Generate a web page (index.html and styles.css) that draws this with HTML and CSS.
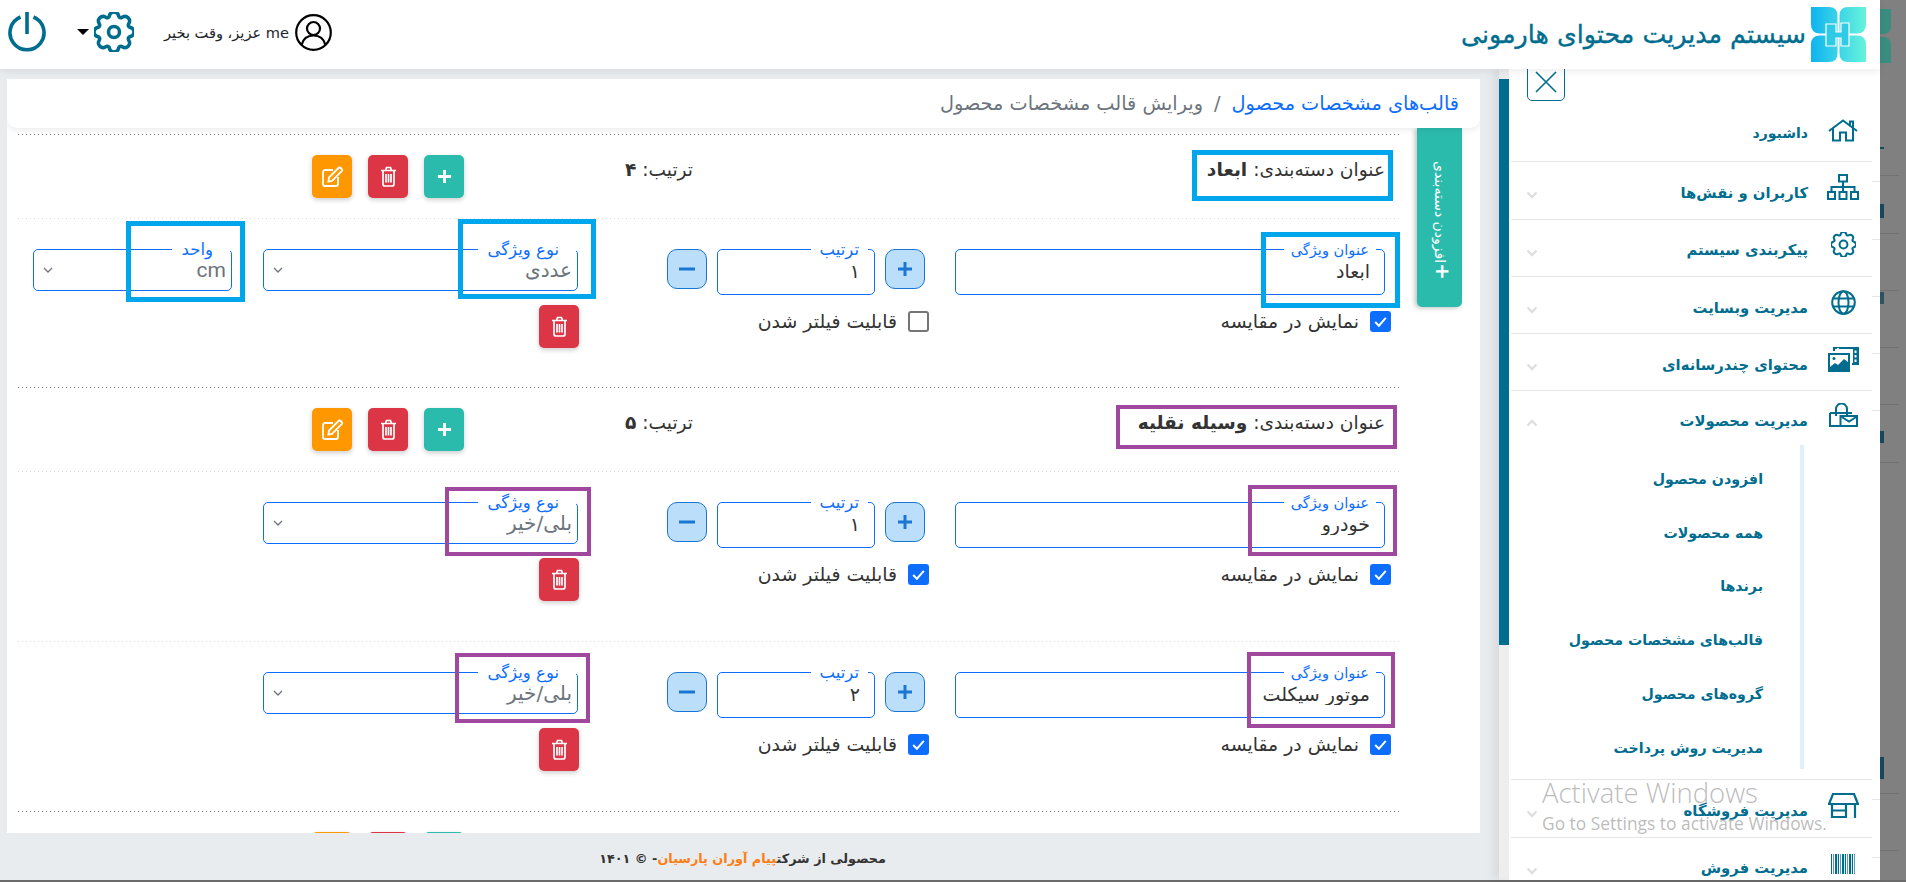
FILE: index.html
```html
<!DOCTYPE html>
<html lang="fa" dir="rtl">
<head>
<meta charset="utf-8">
<title>سیستم مدیریت محتوای هارمونی</title>
<link rel="stylesheet" href="styles.css">
</head>
<body>
<svg class="defs" width="0" height="0">
  <symbol id="trash" viewBox="0 0 17 21"><path d="M1 4.5h15M5.5 4.5l1-3h4l1 3M3 4.5V18a2 2 0 0 0 2 2h7a2 2 0 0 0 2-2V4.5M6 8v8.5M8.5 8v8.5M11 8v8.5" fill="none" stroke="#fff" stroke-width="1.7"/></symbol>
  <symbol id="edit" viewBox="0 0 23 21"><path d="M12 4H4a2 2 0 0 0-2 2v12a2 2 0 0 0 2 2h11a2 2 0 0 0 2-2v-7M8 11.5 17.5 2a1.6 1.6 0 0 1 2.2 0l1 1a1.6 1.6 0 0 1 0 2.2L11 15l-3.6.6z" fill="none" stroke="#fff" stroke-width="1.8"/></symbol>
  <symbol id="plus" viewBox="0 0 16 16"><path d="M8 1v14M1 8h14" fill="none" stroke="currentColor" stroke-width="3"/></symbol>
  <symbol id="minus" viewBox="0 0 16 16"><path d="M0 8h16" fill="none" stroke="currentColor" stroke-width="3"/></symbol>
  <symbol id="tick" viewBox="0 0 16 16"><path d="M3 8.5 6.5 12 13 4.5" fill="none" stroke="#fff" stroke-width="1.8"/></symbol>
  <symbol id="chev" viewBox="0 0 12 12"><path d="M2 4l4 4 4-4" fill="none" stroke="#6c757d" stroke-width="1.3"/></symbol>
  <symbol id="fold" viewBox="0 0 12 8"><path d="M1.5 1.5 6 6l4.5-4.5" fill="none" stroke="#dedede" stroke-width="2.4"/></symbol>
</svg>

<div class="screen">
  <div class="app">
    <header class="topbar">
      <div class="brand">
        <svg class="logo" viewBox="0 0 55 55" width="55" height="55">
          <defs><linearGradient id="lg" x1="0" y1="0" x2="1" y2="0"><stop offset="0" stop-color="#0fb4f0"/><stop offset="1" stop-color="#66f3dc"/></linearGradient></defs>
          <path fill="url(#lg)" d="M0 0H18Q26.5 0 26.5 8.5V26.5H9Q0 26.5 0 17.5ZM55 0H37Q28.5 0 28.5 8.5V26.5H46Q55 26.5 55 17.5ZM0 55H18Q26.5 55 26.5 46.5V28.5H9Q0 28.5 0 37.5ZM55 55H37Q28.5 55 28.5 46.5V28.5H46Q55 28.5 55 37.5Z"/>
          <path fill="#2fcbe6" stroke="#fff" stroke-width="1.2" d="M15 17h10v8h5v-9h8v23h-8v-8h-5v8h-10z"/>
        </svg>
        <span class="brand-title">سیستم مدیریت محتوای هارمونی</span>
      </div>
      <div class="tools">
        <svg class="user" viewBox="0 0 37 37" width="37" height="37"><circle cx="18.5" cy="18.5" r="17.3" fill="none" stroke="#000" stroke-width="2.2"/><circle cx="18.5" cy="14.5" r="6.5" fill="none" stroke="#000" stroke-width="2.2"/><path d="M6.5 31c1.5-6 6-9.5 12-9.5s10.5 3.5 12 9.5" fill="none" stroke="#000" stroke-width="2.2"/></svg>
        <span class="greet">me عزیز، وقت بخیر</span>
        <svg class="gear" viewBox="0 0 16 16" width="40" height="40"><g fill="none" stroke="#006d8f" stroke-width="1.4"><circle cx="8" cy="8" r="2.2"/><path d="M9.796 1.343c-.527-1.79-3.065-1.79-3.592 0l-.094.319a.873.873 0 0 1-1.255.52l-.292-.16c-1.64-.892-3.433.902-2.54 2.541l.159.292a.873.873 0 0 1-.52 1.255l-.319.094c-1.79.527-1.79 3.065 0 3.592l.319.094a.873.873 0 0 1 .52 1.255l-.16.292c-.892 1.64.901 3.434 2.541 2.54l.292-.159a.873.873 0 0 1 1.255.52l.094.319c.527 1.79 3.065 1.79 3.592 0l.094-.319a.873.873 0 0 1 1.255-.52l.292.16c1.64.893 3.434-.902 2.54-2.541l-.159-.292a.873.873 0 0 1 .52-1.255l.319-.094c1.79-.527 1.79-3.065 0-3.592l-.319-.094a.873.873 0 0 1-.52-1.255l.16-.292c.893-1.64-.902-3.433-2.541-2.54l-.292.159a.873.873 0 0 1-1.255-.52z"/></g></svg>
        <span class="caret"></span>
        <svg class="power" viewBox="0 0 40 40" width="40" height="40"><g fill="none" stroke="#006d8f" stroke-width="3.6"><path d="M13.5 5a17 17 0 1 0 13 0"/><path d="M20 0v22"/></g></svg>
      </div>
    </header>

    <div class="workspace">
      <aside class="sidebar">
        <div class="panel">
          <button class="close"><svg viewBox="0 0 22 22" width="22" height="22"><path d="M1 1l20 20M21 1 1 21" stroke="#006d8f" stroke-width="1.6"/></svg></button>
          <nav class="menu">
            <div class="item first">
              <span class="ico"><svg viewBox="0 0 30 23" width="30" height="23"><path d="M1 12 15 1.5 29 12M5 9v12.5h7v-8h6v8h7V9M22 6.5V2.5h3v7" fill="none" stroke="#006d8f" stroke-width="2"/></svg></span>
              <span class="label">داشبورد</span>
            </div>
            <div class="item">
              <span class="ico"><svg viewBox="0 0 32 26" width="32" height="26"><g fill="none" stroke="#006d8f" stroke-width="2"><rect x="12" y="1" width="8" height="6.5"/><rect x="1" y="18" width="7" height="7"/><rect x="12.5" y="18" width="7" height="7"/><rect x="24" y="18" width="7" height="7"/><path d="M16 7.5V18M4.5 18v-5h23v5"/></g></svg></span>
              <span class="label">کاربران و نقش‌ها</span>
              <svg class="fold"><use href="#fold"/></svg>
            </div>
            <div class="item">
              <span class="ico"><svg viewBox="0 0 16 16" width="25" height="25"><g fill="none" stroke="#006d8f" stroke-width="1.3"><circle cx="8" cy="8" r="2.5"/><path d="M9.796 1.343c-.527-1.79-3.065-1.79-3.592 0l-.094.319a.873.873 0 0 1-1.255.52l-.292-.16c-1.64-.892-3.433.902-2.54 2.541l.159.292a.873.873 0 0 1-.52 1.255l-.319.094c-1.79.527-1.79 3.065 0 3.592l.319.094a.873.873 0 0 1 .52 1.255l-.16.292c-.892 1.64.901 3.434 2.541 2.54l.292-.159a.873.873 0 0 1 1.255.52l.094.319c.527 1.79 3.065 1.79 3.592 0l.094-.319a.873.873 0 0 1 1.255-.52l.292.16c1.64.893 3.434-.902 2.54-2.541l-.159-.292a.873.873 0 0 1 .52-1.255l.319-.094c1.79-.527 1.79-3.065 0-3.592l-.319-.094a.873.873 0 0 1-.52-1.255l.16-.292c.893-1.64-.902-3.433-2.541-2.54l-.292.159a.873.873 0 0 1-1.255-.52z"/></g></svg></span>
              <span class="label">پیکربندی سیستم</span>
              <svg class="fold"><use href="#fold"/></svg>
            </div>
            <div class="item">
              <span class="ico"><svg viewBox="0 0 25 25" width="25" height="25"><g fill="none" stroke="#006d8f" stroke-width="2"><circle cx="12.5" cy="12.5" r="11.3"/><ellipse cx="12.5" cy="12.5" rx="5" ry="11.3"/><path d="M2 8.5h21M2 16.5h21"/></g></svg></span>
              <span class="label">مدیریت وبسایت</span>
              <svg class="fold"><use href="#fold"/></svg>
            </div>
            <div class="item">
              <span class="ico"><svg viewBox="0 0 31 25" width="31" height="25"><path fill="#006d8f" d="M0 6h22v19H0z"/><path fill="#fff" d="M2 8h18v7l-4-3-6 6-3-2-5 4z"/><circle cx="6" cy="11.5" r="1.5" fill="#006d8f"/><path fill="none" stroke="#006d8f" stroke-width="2" d="M6 4V1h24v16h-6"/><path fill="#006d8f" d="M25 1h5v16h-5z"/><path fill="#fff" d="M26.5 3.5h2V6h-2zM26.5 8h2v2.5h-2zM26.5 12.5h2V15h-2zM9 1h2v3H9z"/></svg></span>
              <span class="label">محتوای چندرسانه‌ای</span>
              <svg class="fold"><use href="#fold"/></svg>
            </div>
            <div class="item open">
              <span class="ico"><svg viewBox="0 0 29 24" width="29" height="24"><g fill="none" stroke="#006d8f" stroke-width="2"><path d="M7 13V6a5.500 5.500 0 0 1 11 0v7M1 10h22M1 10v13h11"/><rect x="11.500" y="13" width="16.500" height="10" fill="#fff"/><path d="M12 13.500l8 5 8-5"/></g></svg></span>
              <span class="label">مدیریت محصولات</span>
              <svg class="fold up"><use href="#fold"/></svg>
            </div>
            <div class="sub-wrap">
              <ul class="sub">
                <li>افزودن محصول</li>
                <li>همه محصولات</li>
                <li>برندها</li>
                <li>قالب‌های مشخصات محصول</li>
                <li>گروه‌های محصول</li>
                <li>مدیریت روش پرداخت</li>
              </ul>
            </div>
            <div class="item">
              <span class="ico"><svg viewBox="0 0 31 25" width="31" height="25"><g fill="none" stroke="#006d8f" stroke-width="2.2"><path d="M1 11 5 1h21l4 10zM4 11v14M27 11v14M4 24h14M18 11v14M4 17.5h14"/></g></svg></span>
              <span class="label">مدیریت فروشگاه</span>
              <svg class="fold"><use href="#fold"/></svg>
            </div>
            <div class="item">
              <span class="ico"><span class="barcode"></span></span>
              <span class="label">مدیریت فروش</span>
              <svg class="fold"><use href="#fold"/></svg>
            </div>
          </nav>
        </div>
        <div class="scroll"><div class="thumb"></div></div>
      </aside>

      <div class="content">
        <main class="main">
          <div class="crumb">
            <a class="crumb-link">قالب‌های مشخصات محصول</a>
            <span class="crumb-sep">/</span>
            <span class="crumb-now">ویرایش قالب مشخصات محصول</span>
          </div>

          <section class="group">
            <div class="group-head">
              <div class="group-title">عنوان دسته‌بندی: <b>ابعاد</b></div>
              <div class="group-order">ترتیب: <b>۴</b></div>
              <div class="group-actions">
                <button class="act teal"><svg width="15" height="15"><use href="#plus"/></svg></button>
                <button class="act red"><svg width="17" height="21"><use href="#trash"/></svg></button>
                <button class="act orange"><svg width="23" height="21"><use href="#edit"/></svg></button>
              </div>
            </div>
            <div class="row short">
              <div class="col-title">
                <label class="field tall"><span class="tag">عنوان ویژگی</span><input value="ابعاد" readonly></label>
                <div class="check-line"><span class="check on"><svg width="17" height="17"><use href="#tick"/></svg></span>نمایش در مقایسه</div>
              </div>
              <div class="col-order">
                <div class="stepper">
                  <button class="step"><svg width="16" height="16"><use href="#plus"/></svg></button>
                  <label class="field tall grow"><span class="tag big">ترتیب</span><input value="۱" readonly></label>
                  <button class="step"><svg width="16" height="16"><use href="#minus"/></svg></button>
                </div>
                <div class="check-line near"><span class="check"></span>قابلیت فیلتر شدن</div>
              </div>
              <div class="col-type">
                <label class="field pick"><span class="tag big">نوع ویژگی</span><span class="val">عددی</span><svg class="arrow"><use href="#chev"/></svg></label>
                <button class="act red del"><svg width="17" height="21"><use href="#trash"/></svg></button>
              </div>
              <div class="col-unit">
                <label class="field pick"><span class="tag big">واحد</span><span class="val latin">cm</span><svg class="arrow"><use href="#chev"/></svg></label>
              </div>
            </div>
          </section>

          <section class="group">
            <div class="group-head">
              <div class="group-title">عنوان دسته‌بندی: <b>وسیله نقلیه</b></div>
              <div class="group-order">ترتیب: <b>۵</b></div>
              <div class="group-actions">
                <button class="act teal"><svg width="15" height="15"><use href="#plus"/></svg></button>
                <button class="act red"><svg width="17" height="21"><use href="#trash"/></svg></button>
                <button class="act orange"><svg width="23" height="21"><use href="#edit"/></svg></button>
              </div>
            </div>
            <div class="row">
              <div class="col-title">
                <label class="field tall"><span class="tag">عنوان ویژگی</span><input value="خودرو" readonly></label>
                <div class="check-line"><span class="check on"><svg width="17" height="17"><use href="#tick"/></svg></span>نمایش در مقایسه</div>
              </div>
              <div class="col-order">
                <div class="stepper">
                  <button class="step"><svg width="16" height="16"><use href="#plus"/></svg></button>
                  <label class="field tall grow"><span class="tag big">ترتیب</span><input value="۱" readonly></label>
                  <button class="step"><svg width="16" height="16"><use href="#minus"/></svg></button>
                </div>
                <div class="check-line near"><span class="check on"><svg width="17" height="17"><use href="#tick"/></svg></span>قابلیت فیلتر شدن</div>
              </div>
              <div class="col-type">
                <label class="field pick"><span class="tag big">نوع ویژگی</span><span class="val">بلی/خیر</span><svg class="arrow"><use href="#chev"/></svg></label>
                <button class="act red del"><svg width="17" height="21"><use href="#trash"/></svg></button>
              </div>
            </div>
            <div class="row">
              <div class="col-title">
                <label class="field tall"><span class="tag">عنوان ویژگی</span><input value="موتور سیکلت" readonly></label>
                <div class="check-line"><span class="check on"><svg width="17" height="17"><use href="#tick"/></svg></span>نمایش در مقایسه</div>
              </div>
              <div class="col-order">
                <div class="stepper">
                  <button class="step"><svg width="16" height="16"><use href="#plus"/></svg></button>
                  <label class="field tall grow"><span class="tag big">ترتیب</span><input value="۲" readonly></label>
                  <button class="step"><svg width="16" height="16"><use href="#minus"/></svg></button>
                </div>
                <div class="check-line near"><span class="check on"><svg width="17" height="17"><use href="#tick"/></svg></span>قابلیت فیلتر شدن</div>
              </div>
              <div class="col-type">
                <label class="field pick"><span class="tag big">نوع ویژگی</span><span class="val">بلی/خیر</span><svg class="arrow"><use href="#chev"/></svg></label>
                <button class="act red del"><svg width="17" height="21"><use href="#trash"/></svg></button>
              </div>
            </div>
          </section>

          <section class="group">
            <div class="group-head">
              <div class="group-title"></div>
              <div class="group-order"></div>
              <div class="group-actions">
                <button class="act teal"></button>
                <button class="act red"></button>
                <button class="act orange"></button>
              </div>
            </div>
          </section>

          <button class="add-tab"><span class="add-plus">+</span> افزودن دسته‌بندی</button>

          <span class="mark blue m1"></span>
          <span class="mark blue m2"></span>
          <span class="mark blue m3"></span>
          <span class="mark blue m4"></span>
          <span class="mark purple m5"></span>
          <span class="mark purple m6"></span>
          <span class="mark purple m7"></span>
          <span class="mark purple m8"></span>
          <span class="mark purple m9"></span>
        </main>
        <footer class="foot"><span>محصولی از شرکت<em>پیام آوران پارسیان</em>- © ۱۴۰۱</span></footer>
      </div>
    </div>
  </div>

  <div class="dim">
    <svg class="dim-logo" viewBox="0 0 11 54" width="11" height="54"><path fill="#3b8d80" d="M0 0h11v17q0 8-8 8H0zM0 54h11V36q0-8-8-8H0z"/></svg>
    <div class="dim-rows">
      <div class="dim-row"><i class="g1"></i></div>
      <div class="dim-row"><i class="g2"></i></div>
      <div class="dim-row"></div>
      <div class="dim-row"><i class="g3"></i></div>
      <div class="dim-row"></div>
      <div class="dim-row"><i class="g4"></i></div>
    </div>
    <div class="dim-rows low">
      <div class="dim-row"><i class="g5"></i></div>
      <div class="dim-row"></div>
    </div>
  </div>
</div>

<div class="activate">
  <div class="activate-big">Activate Windows</div>
  <div class="activate-small">Go to Settings to activate Windows.</div>
</div>
</body>
</html>
```
FILE: styles.css
```css
* { box-sizing: border-box; }
html, body { margin: 0; height: 882px; overflow: hidden; }
body { background: #6b6b6b; font-family: "DejaVu Sans", "Noto Sans", sans-serif; color: #333; font-size: 15px; }
.defs { position: absolute; }
button { font-family: inherit; cursor: pointer; }

.screen { display: flex; height: 880px; direction: ltr; }
.app { width: 1880px; display: flex; flex-direction: column; background: #e9ecef; }
.dim { width: 26px; background: #808080; display: flex; flex-direction: column; }

.topbar { height: 69px; flex: none; background: #fff; display: flex; justify-content: space-between; align-items: flex-start; position: relative; z-index: 5; box-shadow: 0 2px 8px rgba(0,0,0,.08); padding: 0 14px 0 7px; flex-direction: row-reverse; }
.brand { display: flex; direction: rtl; align-items: center; gap: 5px; height: 69px; }
.logo { flex: none; }
.brand-title { color: #006d8f; font-size: 25.3px; -webkit-text-stroke: .35px #006d8f; }
.tools { display: flex; direction: rtl; align-items: center; flex-direction: row; height: 64px; }
.user { flex: none; margin-left: 6px; }
.greet { font-size: 14.6px; color: #212529; margin-left: 30px; }
.gear { margin-left: 5px; }
.caret { width: 0; height: 0; border-left: 6px solid transparent; border-right: 6px solid transparent; border-top: 6px solid #000; margin-left: 30px; }

.workspace { flex: 1; display: flex; direction: ltr; flex-direction: row-reverse; min-height: 0; }
.sidebar { width: 381px; flex: none; display: flex; flex-direction: row-reverse; box-shadow: -4px 0 10px rgba(0,0,0,.09); overflow: hidden; }
.scroll { width: 10px; flex: none; order: 2; background: #eee; margin-top: 10px; margin-bottom: 3px; }
.thumb { height: 566px; background: #006d8f; }
.panel { width: 371px; flex: none; background: #fff; padding: 0 8px 0 2px; display: flex; flex-direction: column; overflow: hidden; }
.close { width: 38px; height: 38px; margin: -6px 0 4px 16px; align-self: flex-start; background: #fff; border: 1.5px solid #006d8f; border-radius: 5px; padding: 0; display: flex; align-items: center; justify-content: center; flex: none; }

.menu { direction: rtl; display: flex; flex-direction: column; }
.item { height: 57.3px; flex: none; border-bottom: 1px solid #e6e6e6; display: flex; align-items: center; position: relative; color: #006d8f; }
.item::after { content: ""; position: absolute; right: -8px; top: 19px; width: 8px; height: 1px; background: #e6e6e6; }
.item.first::after { display: none; }
.item.open { height: 53.5px; border-bottom: 0; }
.ico { width: 58px; flex: none; display: flex; justify-content: center; margin-bottom: 6px; }
.label { font-weight: bold; font-size: 14.8px; margin-right: 6px; padding-top: 4px; }
.first .label { padding-top: 0; font-size: 14px; }
.fold { width: 12px; height: 8px; margin-right: auto; margin-left: 15px; margin-top: 10px; }
.fold.up { transform: rotate(180deg); }
.sub-wrap { height: 335.5px; flex: none; border-bottom: 1px solid #e6e6e6; }
.sub { list-style: none; margin: 0 68px 0 0; padding: 7px 37px 0 0; height: 324px; border-right: 4px solid #dff0fb; color: #006d8f; font-weight: bold; font-size: 14.2px; }
.sub li { height: 53.8px; display: flex; align-items: center; }
.barcode { display: block; width: 25px; height: 20px; margin-top: 2px; background: repeating-linear-gradient(to right, #006d8f 0 1px, #fff 1px 2px, #5b9fb8 2px 3px, #fff 3px 4px, #006d8f 4px 6px, #cfe3ea 6px 7px); }

.content { flex: 1; display: flex; flex-direction: column; min-width: 0; }
.main { flex: 1; margin: 10px 19px 0 7px; background: #fff; position: relative; overflow: hidden; direction: rtl; min-height: 0; }
.crumb { height: 49px; background: #fff; border-radius: 0 0 10px 10px; box-shadow: 0 2px 6px rgba(0,0,0,.08); padding: 0 21px; display: flex; align-items: center; gap: 11px; font-size: 19.3px; position: relative; z-index: 2; margin-bottom: 6px; }
.crumb-link { color: #0d6efd; }
.crumb-sep, .crumb-now { color: #6c757d; }

.group { width: 1382px; margin-right: 80px; position: relative; }
.group-head { height: 84px; padding: 21px 15px 0; display: flex; align-items: flex-start; background: repeating-linear-gradient(to right, #777 0 1px, transparent 1px 4px) top / 100% 1px no-repeat; }
.group-title { width: 692px; font-size: 18.6px; line-height: 30px; flex: none; }
.group-order { width: 229px; font-size: 18.6px; line-height: 30px; flex: none; }
.group-actions { display: flex; gap: 16px; }
.act { width: 40px; height: 43px; border: 0; border-radius: 5px; padding: 0; display: flex; align-items: center; justify-content: center; color: #fff; box-shadow: 0 2px 5px rgba(0,0,0,.2); flex: none; }
.teal { background: #2bbbad; }
.red { background: #dc3545; }
.orange { background: #ff9800; }

.row { height: 170px; padding: 31px 15px 0; display: flex; align-items: flex-start; background: repeating-linear-gradient(to right, #ddd 0 1px, transparent 1px 4px) top / 100% 1px no-repeat; }
.row.short { height: 169px; }
.col-title { width: 430px; margin-left: 30px; flex: none; }
.col-order { width: 258px; margin-left: 89px; flex: none; }
.col-type { width: 315px; margin-left: 31px; flex: none; }
.col-unit { width: 199px; flex: none; }

.field { display: block; position: relative; border: 1px solid #0d6efd; border-radius: 5px; height: 42px; background: #fff; }
.field.tall { height: 46px; }
.field.grow { flex: 1; }
.field input { width: 100%; height: 100%; border: 0; background: transparent; outline: 0; padding: 0 14px 2px; font: 19px "DejaVu Sans", sans-serif; color: #333; text-align: right; direction: rtl; }
.tag { position: absolute; top: -10px; right: 8px; background: #fff; color: #0d6efd; padding: 0 7px; font-size: 14.6px; line-height: 19px; white-space: nowrap; }
.tag.big { font-size: 16.5px; top: -11px; right: 6px; padding: 0 9px; line-height: 21px; }
.pick .tag.big { right: 1px; padding: 0 17px 0 10px; }
.val { position: absolute; top: 7px; right: 5px; color: #6c757d; font-size: 20px; line-height: 26px; }
.val.latin { font-family: Roboto, sans-serif; font-size: 21px; }
.arrow { position: absolute; left: 8px; top: 14px; width: 12px; height: 12px; }

.check-line { display: flex; align-items: center; gap: 11px; margin: 15px -6px 0 0; font-size: 18.9px; height: 22px; white-space: nowrap; }
.check-line.near { margin-right: -4px; }
.check { width: 21px; height: 21px; flex: none; border: 2px solid #757575; border-radius: 3px; background: #fff; display: flex; align-items: center; justify-content: center; }
.check.on { background: #0d6efd; border: 0; }
.stepper { display: flex; gap: 10px; align-items: flex-start; }
.step { width: 40px; height: 40px; flex: none; border: 1px solid #1976d2; background: #bbdefb; border-radius: 10px; padding: 0; color: #1976d2; display: flex; align-items: center; justify-content: center; }
.del { margin: 14px -1px 0 0; }

.add-tab { position: absolute; top: 49px; right: 18px; width: 45px; height: 179px; background: #2bbbad; color: #fff; border: 0; border-radius: 0 0 5px 5px; writing-mode: vertical-rl; font-size: 14px; box-shadow: -2px 1px 5px rgba(0,0,0,.25); display: flex; align-items: center; justify-content: flex-start; padding: 0 0 27px; }
.add-plus { font-size: 20px; font-weight: bold; margin-left: 7px; }

.mark { position: absolute; z-index: 3; pointer-events: none; }
.blue { border: 5px solid #00a6ec; }
.purple { border: 4px solid #a0479e; }
.m1 { left: 1185px; top: 71px; width: 201px; height: 51px; }
.m2 { left: 1254px; top: 153px; width: 139px; height: 76px; }
.m3 { left: 119px; top: 142px; width: 119px; height: 81px; }
.m4 { left: 451px; top: 140px; width: 138px; height: 80px; }
.m5 { left: 1109px; top: 326px; width: 281px; height: 44px; }
.m6 { left: 1241px; top: 406px; width: 149px; height: 71px; }
.m7 { left: 438px; top: 408px; width: 146px; height: 69px; }
.m8 { left: 1240px; top: 573px; width: 148px; height: 76px; }
.m9 { left: 448px; top: 574px; width: 135px; height: 70px; }

.foot { height: 47px; flex: none; display: flex; align-items: center; justify-content: center; direction: rtl; font-size: 12.8px; font-weight: bold; color: #333; padding: 3px 14px 0 0; }
.foot em { font-style: normal; color: #fd7e14; }

.dim-logo { margin-top: 9px; flex: none; }
.dim-rows { margin-top: 56px; }
.dim-rows.low { margin-top: 274px; }
.dim-row { height: 57.3px; position: relative; }
.dim-row::after { content: ""; position: absolute; left: 0; bottom: 0; width: 19px; height: 1px; background: #717171; }
.dim-row i { position: absolute; left: 0; background: #17475a; display: block; width: 4px; }
.g1 { top: 28px; height: 2px; }
.g2 { top: 28px; height: 14px; }
.g3 { top: 1px; height: 12px; opacity: .8; }
.g4 { top: 26px; height: 12px; }
.g5 { top: 20px; height: 22px; }

.activate { position: absolute; left: 1542px; top: 775px; color: rgba(120,120,120,.5); font-family: "Open Sans", sans-serif; direction: ltr; pointer-events: none; z-index: 9; }
.activate-big { font-size: 27.5px; line-height: 36px; font-weight: 300; }
.activate-small { font-size: 17.4px; line-height: 25px; }
```
